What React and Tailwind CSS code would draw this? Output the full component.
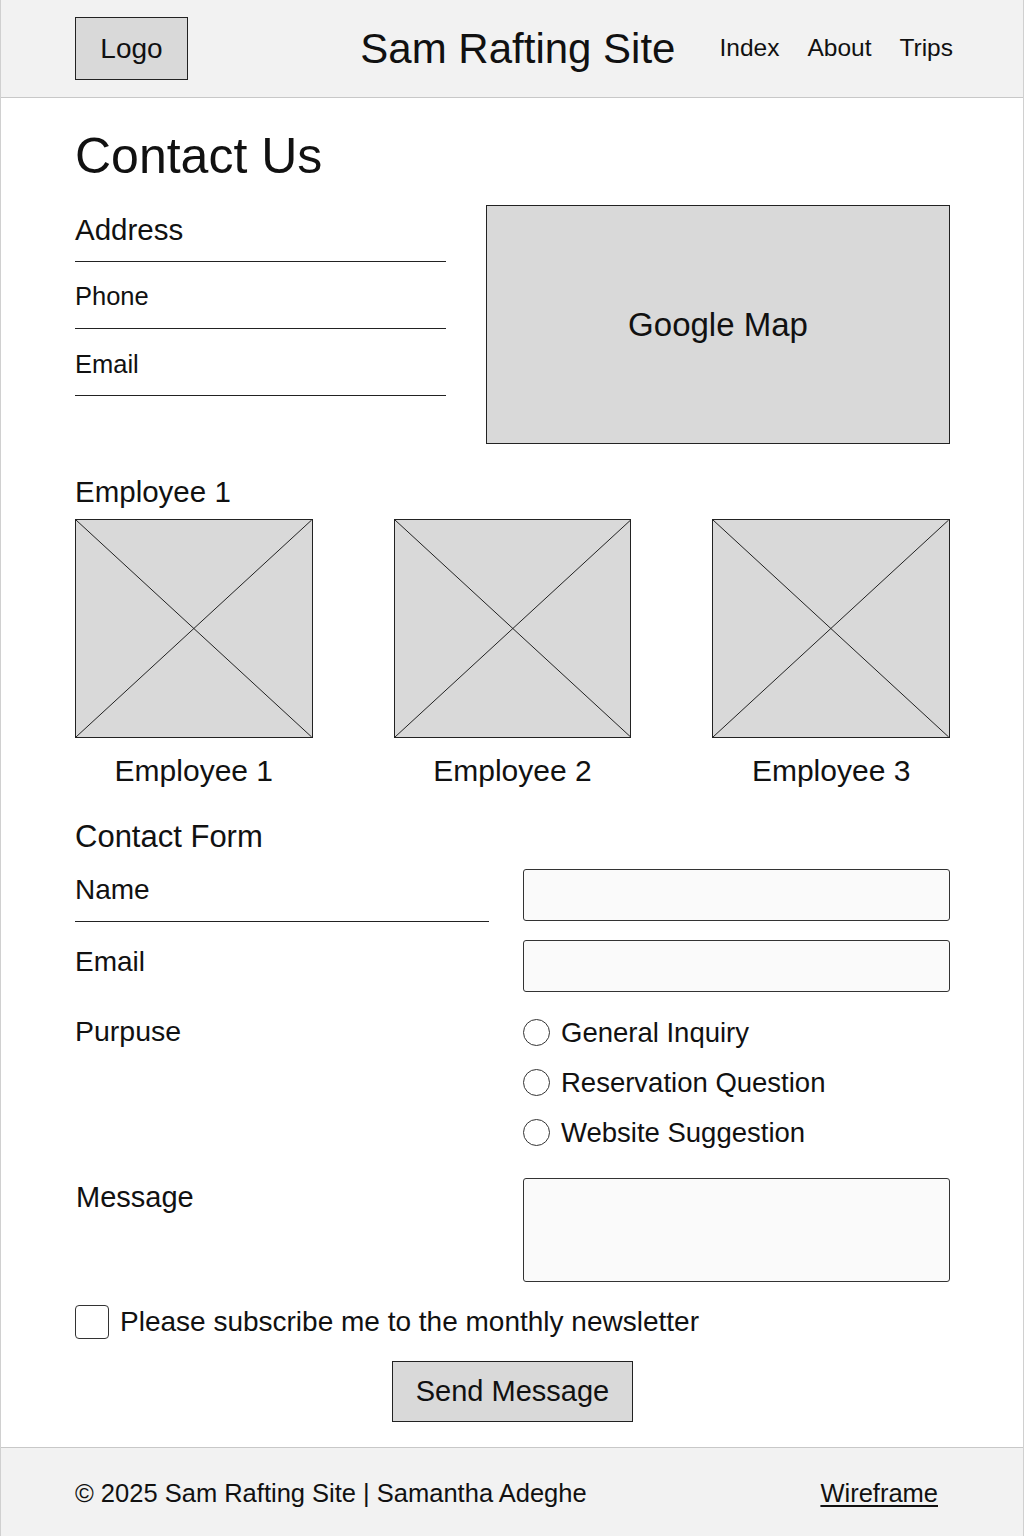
import React from "react";

const font = { fontFamily: '"Liberation Sans", Arial, sans-serif' };

function Placeholder() {
  return (
    <div className="h-[219px] border border-[#222] bg-[#d9d9d9]">
      <svg className="block h-full w-full" viewBox="0 0 100 100" preserveAspectRatio="none">
        <line x1="0" y1="0" x2="100" y2="100" stroke="#222" strokeWidth="1" vectorEffect="non-scaling-stroke" />
        <line x1="100" y1="0" x2="0" y2="100" stroke="#222" strokeWidth="1" vectorEffect="non-scaling-stroke" />
      </svg>
    </div>
  );
}

function Radio({ label }) {
  return (
    <div className="flex h-[50px] items-center">
      <span className="h-[27px] w-[27px] rounded-full border-[1.5px] border-[#333] bg-white" />
      <span className="ml-[11px] text-[27.5px] leading-none">{label}</span>
    </div>
  );
}

export default function App() {
  const employees = ["Employee 1", "Employee 2", "Employee 3"];

  return (
    <div style={font} className="w-[1024px] border-x border-[#d0d0d0] bg-white text-[#111]">
      {/* Header */}
      <header className="flex h-[98px] items-center border-b border-[#c8c8c8] bg-[#f2f2f2] pl-[74px] pr-[70px]">
        <div className="flex h-[63px] w-[113px] items-center justify-center border border-[#222] bg-[#d9d9d9] text-[28px] leading-none">
          Logo
        </div>
        <div className="ml-auto flex items-center">
          <h1 className="text-[42px] leading-none">Sam Rafting Site</h1>
          <nav className="ml-[44px] flex gap-[28px] text-[24.5px] leading-none">
            <a>Index</a>
            <a>About</a>
            <a>Trips</a>
          </nav>
        </div>
      </header>

      <main className="pl-[74px] pr-[73px]">
        <h2 className="mt-[33px] text-[50px] leading-none">Contact Us</h2>

        {/* Contact info + map */}
        <div className="mt-[24px] flex items-start justify-between">
          <div className="w-[371px]">
            <div className="flex h-[57px] items-end border-b border-[#222] pb-[17px] text-[29.5px] leading-none">Address</div>
            <div className="flex h-[67px] items-end border-b border-[#222] pb-[19px] text-[25.5px] leading-none">Phone</div>
            <div className="flex h-[67px] items-end border-b border-[#222] pb-[18px] text-[25.5px] leading-none">Email</div>
          </div>
          <div className="flex h-[239px] w-[464px] items-center justify-center border border-[#222] bg-[#d9d9d9] text-[33px] leading-none">
            Google Map
          </div>
        </div>

        {/* Employees */}
        <h3 className="mt-[33px] text-[29.5px] leading-none">Employee 1</h3>
        <div className="mt-[12px] grid grid-cols-3 gap-x-[81px]">
          {employees.map((name) => (
            <div key={name}>
              <Placeholder />
              <p className="mt-[18px] text-center text-[30px] leading-none">{name}</p>
            </div>
          ))}
        </div>

        {/* Contact form */}
        <h3 className="mt-[35px] text-[31px] leading-none">Contact Form</h3>
        <form className="mt-[17px]">
          <div className="grid grid-cols-[414px_1fr] gap-x-[34px]">
            <div className="h-[53px] border-b border-[#222] pt-[7px] text-[28px] leading-none">Name</div>
            <div className="h-[52px] rounded-[3px] border border-[#333] bg-[#fafafa]" />
          </div>
          <div className="mt-[18px] grid grid-cols-[414px_1fr] gap-x-[34px]">
            <div className="pt-[8px] text-[28px] leading-none">Email</div>
            <div className="h-[52px] rounded-[3px] border border-[#333] bg-[#fafafa]" />
          </div>
          <div className="mt-[16px] grid grid-cols-[414px_1fr] gap-x-[34px]">
            <div className="pt-[9px] text-[28.5px] leading-none">Purpuse</div>
            <div>
              <Radio label="General Inquiry" />
              <Radio label="Reservation Question" />
              <Radio label="Website Suggestion" />
            </div>
          </div>
          <div className="mt-[20px] grid grid-cols-[414px_1fr] gap-x-[34px]">
            <div className="pl-[1px] pt-[5px] text-[29px] leading-none">Message</div>
            <div className="h-[104px] rounded-[3px] border border-[#333] bg-[#fafafa]" />
          </div>

          <label className="mt-[23px] flex items-center">
            <span className="h-[34px] w-[34px] rounded-[4px] border border-[#333] bg-white" />
            <span className="ml-[11px] text-[28px] leading-none">Please subscribe me to the monthly newsletter</span>
          </label>

          <div className="mt-[22px] flex justify-center">
            <button type="button" className="flex h-[61px] w-[241px] items-center justify-center border border-[#222] bg-[#d9d9d9] text-[29px] leading-none">
              Send Message
            </button>
          </div>
        </form>
      </main>

      {/* Footer */}
      <footer className="mt-[25px] flex h-[90px] items-center justify-between border-t border-[#c8c8c8] bg-[#f2f2f2] pl-[74px] pr-[85px] pt-[4px] text-[25.5px] leading-none">
        <span>© 2025 Sam Rafting Site | Samantha Adeghe</span>
        <a className="underline underline-offset-[3px]">Wireframe</a>
      </footer>
    </div>
  );
}
